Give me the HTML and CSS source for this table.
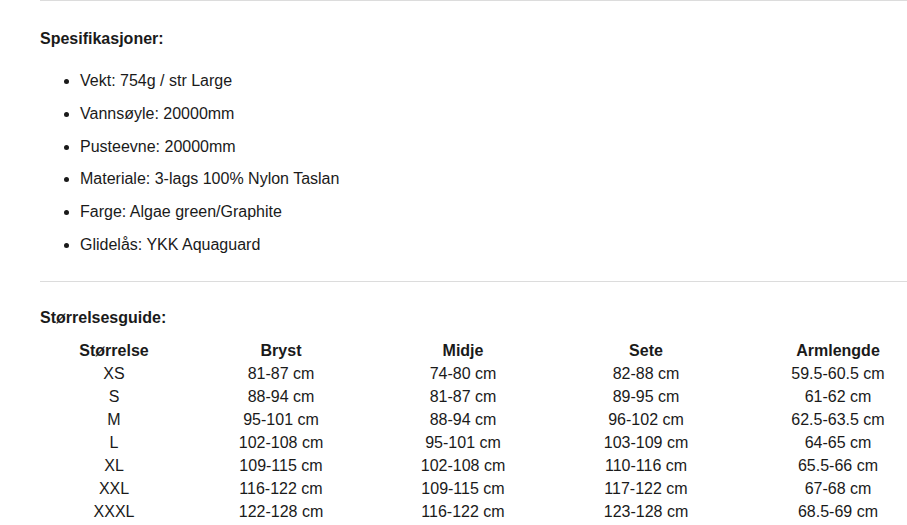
FILE: index.html
```html
<!DOCTYPE html>
<html lang="no">
<head>
<meta charset="utf-8">
<link rel="stylesheet" href="styles.css">
</head>
<body>
<div class="page">
  <section class="block specs">
    <h3 class="title">Spesifikasjoner:</h3>
    <ul class="list">
      <li>Vekt: 754g / str Large</li>
      <li>Vannsøyle: 20000mm</li>
      <li>Pusteevne: 20000mm</li>
      <li>Materiale: 3-lags 100% Nylon Taslan</li>
      <li>Farge: Algae green/Graphite</li>
      <li>Glidelås: YKK Aquaguard</li>
    </ul>
  </section>
  <section class="block sizes">
    <h3 class="title">Størrelsesguide:</h3>
    <table class="size-table">
      <colgroup>
        <col class="c1"><col class="c2"><col class="c3"><col class="c4"><col class="c5">
      </colgroup>
      <thead>
        <tr><th>Størrelse</th><th>Bryst</th><th>Midje</th><th>Sete</th><th>Armlengde</th></tr>
      </thead>
      <tbody>
        <tr><td>XS</td><td>81-87 cm</td><td>74-80 cm</td><td>82-88 cm</td><td>59.5-60.5 cm</td></tr>
        <tr><td>S</td><td>88-94 cm</td><td>81-87 cm</td><td>89-95 cm</td><td>61-62 cm</td></tr>
        <tr><td>M</td><td>95-101 cm</td><td>88-94 cm</td><td>96-102 cm</td><td>62.5-63.5 cm</td></tr>
        <tr><td>L</td><td>102-108 cm</td><td>95-101 cm</td><td>103-109 cm</td><td>64-65 cm</td></tr>
        <tr><td>XL</td><td>109-115 cm</td><td>102-108 cm</td><td>110-116 cm</td><td>65.5-66 cm</td></tr>
        <tr><td>XXL</td><td>116-122 cm</td><td>109-115 cm</td><td>117-122 cm</td><td>67-68 cm</td></tr>
        <tr><td>XXXL</td><td>122-128 cm</td><td>116-122 cm</td><td>123-128 cm</td><td>68.5-69 cm</td></tr>
      </tbody>
    </table>
  </section>
</div>
</body>
</html>
```
FILE: styles.css
```css
html, body {
  margin: 0;
  padding: 0;
  background: #fff;
  overflow: hidden;
}
body {
  font-family: "Liberation Sans", Arial, sans-serif;
  color: #1a1a1a;
  font-size: 16px;
}
.page {
  padding-left: 40px;
  width: 940px;
}
.block {
  border-top: 1px solid #dcdcdc;
}
.title {
  margin: 0;
  font-size: 16px;
  font-weight: bold;
  line-height: 18px;
}
.specs .title {
  padding-top: 29px;
}
.list {
  margin: 24px 0 0 0;
  padding: 0 0 0 40px;
  list-style: disc;
}
.list li {
  line-height: 18px;
  margin-bottom: 14.8px;
}
.specs {
  padding-bottom: 12px;
}
.sizes .title {
  padding-top: 27px;
}
.size-table {
  border-collapse: collapse;
  table-layout: fixed;
  width: 896px;
  margin-top: 12px;
}
.c1 { width: 148px; }
.c2 { width: 186px; }
.c3 { width: 178px; }
.c4 { width: 188px; }
.c5 { width: 196px; }
.size-table th, .size-table td {
  padding: 0;
  text-align: center;
  height: 23px;
  line-height: 23px;
  font-size: 16px;
}
.size-table th {
  font-weight: bold;
}
```
